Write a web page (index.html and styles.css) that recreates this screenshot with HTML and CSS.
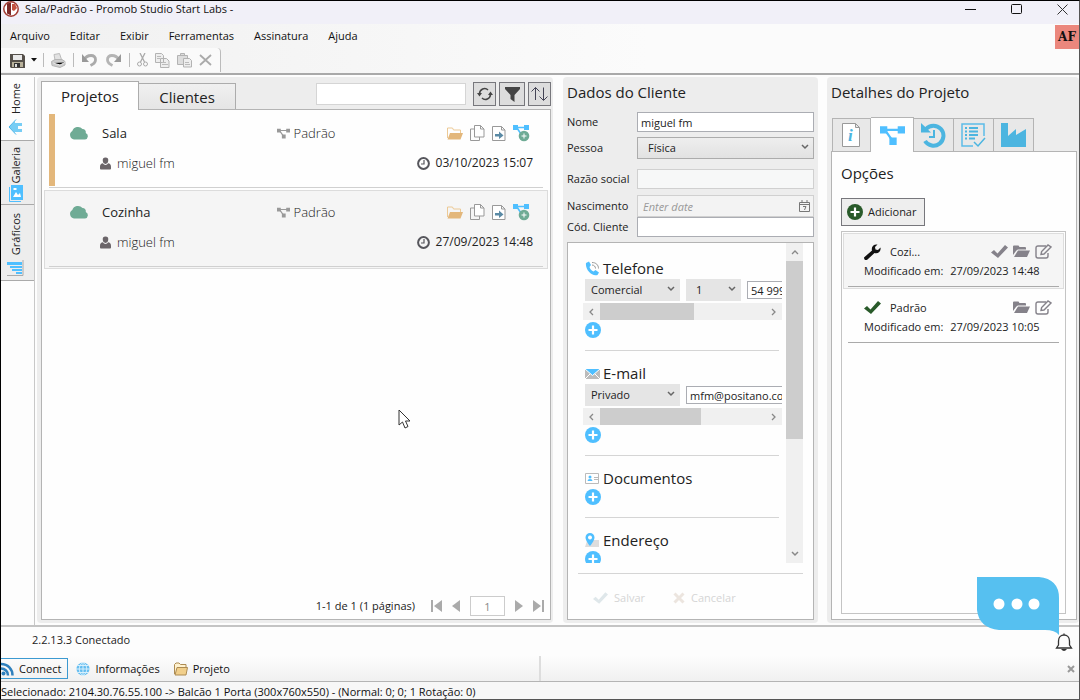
FILE: index.html
```
<!DOCTYPE html>
<html lang="pt-BR">
<head>
  <meta charset="UTF-8">
  <meta name="viewport" content="width=device-width, initial-scale=1.0">
  <title>Promob Studio Start Labs</title>
  <link rel="stylesheet" href="styles.css">
</head>
<body>
  <svg class="defs" aria-hidden="true">
    <symbol id="cloud" viewBox="0 0 20 14"><path fill="#6fab95" d="M5 13.5A4.6 4.6 0 0 1 3.300 5 6 6 0 0 1 13.500 3a3.600 3.600 0 0 1 3.300 4A3.400 3.400 0 0 1 16 13.500z"/></symbol>
    <symbol id="nodes" viewBox="0 0 24 20"><path fill="none" stroke="currentColor" stroke-width="2.200" d="M4 4.500h16M5 5l7 10"/><path fill="currentColor" d="M0 1h7v7H0zM17 1h7v7h-7zM9 12h7v7H9z"/></symbol>
    <symbol id="user" viewBox="0 0 12 13"><path fill="#6b6569" d="M6 0a3 3 0 0 1 3 3.300C9 5.300 7.800 7 6 7S3 5.300 3 3.300A3 3 0 0 1 6 0zM3.200 6.200C3.900 7.300 4.900 8 6 8s2.100-.7 2.800-1.800C10.700 6.400 12 7.800 12 10v2q0 1-1 1H1q-1 0-1-1v-2c0-2.200 1.300-3.600 3.200-3.800z"/></symbol>
    <symbol id="clock" viewBox="0 0 13 13"><circle cx="6.500" cy="6.500" r="5.400" fill="none" stroke="#56565c" stroke-width="2"/><path fill="none" stroke="#56565c" stroke-width="1.200" d="M7 3v4H4"/></symbol>
    <symbol id="folder" viewBox="0 0 16 13"><path fill="none" stroke="#ecc995" d="M.5 11V1h5l1 2h7v3"/><path fill="#e3b77b" d="M3 6h13l-2.500 6.500H.5z"/></symbol>
    <symbol id="copy" viewBox="0 0 15 16"><path fill="#fff" stroke="#999" d="M4.500.5h6l3.500 3.500v8H4.500zM10.500.5V4H14"/><path fill="none" stroke="#999" d="M4.500 4h-4v11.500h9V12"/></symbol>
    <symbol id="export" viewBox="0 0 14 15"><path fill="#fff" stroke="#999" d="M.5.5h9l3.500 3.500v10.500H.5zM9.500.5V4H13"/><path fill="#5a8aa5" d="M3 8h4V5.500l4.500 4L7 13v-2.500H3z"/></symbol>
    <symbol id="addnode" viewBox="0 0 17 17"><path fill="none" stroke="#4fbfff" stroke-width="1.600" d="M3 2.500h10M4 3l4 6"/><path fill="#4fbfff" d="M0 0h5v5H0zM11 0h5v5h-5z"/><circle cx="11" cy="11" r="5.300" fill="#6fab95"/><path stroke="#fff" d="M11 8.500v5M8.500 11h5"/></symbol>
    <symbol id="plus" viewBox="0 0 16 16"><circle cx="8" cy="8" r="8" fill="currentColor"/><path stroke="#fff" stroke-width="2.200" d="M8 3.500v9M3.500 8h9"/></symbol>
    <symbol id="chev" viewBox="0 0 8 6"><path fill="none" stroke="currentColor" stroke-width="1.500" d="M1 1l3 3 3-3"/></symbol>
    <symbol id="check" viewBox="0 0 17 13"><path fill="currentColor" d="M0 7.500L3 5l3.500 3.500L14 0l3 2.500L7 13z"/></symbol>
    <symbol id="cross" viewBox="0 0 12 12"><path stroke="currentColor" stroke-width="3" d="M1.500 1.500l9 9M10.500 1.500l-9 9"/></symbol>
    <symbol id="folder2" viewBox="0 0 17 13"><path fill="currentColor" d="M0 10V1.500Q0 .5 1 .5h4.500l1 1.500H12q1 0 1 1V4.500H5Q4 4.500 3 6z"/><path fill="currentColor" d="M5 5.500h12L14 12H1z"/></symbol>
    <symbol id="edit" viewBox="0 0 17 15"><path fill="none" stroke="currentColor" stroke-width="1.400" d="M11 2H3Q1 2 1 4v8q0 2 2 2h8q2 0 2-2V9"/><path fill="none" stroke="currentColor" stroke-width="1.400" d="M6 10.500l.6-3L13 1l3 2-7 7z"/></symbol>
  </svg>

  <header class="titlebar">
    <svg class="logo" viewBox="0 0 16 16"><circle cx="8" cy="8" r="7.200" fill="#fff" stroke="#a33c33" stroke-width="1.500"/><path fill="#7d2a28" d="M4 2.500L8 1.500v13l-4-2z"/><path fill="#c4523f" d="M9 3h3l2 4-3 3-2-1z"/></svg>
    <h1>Sala/Padrão - Promob Studio Start Labs -</h1>
    <div class="win-buttons">
      <button aria-label="Minimizar"><svg width="11" height="11"><path stroke="#111" d="M0 5.500h11"/></svg></button>
      <button aria-label="Maximizar"><svg width="11" height="11"><rect x=".5" y=".5" width="10" height="9" rx="1" fill="none" stroke="#111"/></svg></button>
      <button aria-label="Fechar"><svg width="11" height="11"><path stroke="#333" d="M.5.500l10 10M10.500.500l-10 10"/></svg></button>
    </div>
  </header>

  <div class="top">
    <div class="top-left">
      <nav class="menu">
        <a href="#">Arquivo</a><a href="#">Editar</a><a href="#">Exibir</a><a href="#">Ferramentas</a><a href="#">Assinatura</a><a href="#">Ajuda</a>
      </nav>
      <div class="toolbar">
        <button aria-label="Salvar"><svg width="15" height="15"><path fill="#55504a" d="M0 1h13l2 2v12H1l-1-1z"/><path fill="#e9e9e9" d="M3 2h9v5H3z"/><path fill="#b9b29b" d="M2 9h11v5H2z"/><path fill="#333" d="M4 10h6v4H4z"/><path fill="#ddd" d="M5 11h2v3H5z"/></svg></button>
        <button class="drop" aria-label="Mais"><svg width="6" height="4"><path fill="#111" d="M0 0h6L3 3.500z"/></svg></button>
        <i class="sep"></i>
        <button aria-label="Imprimir"><svg width="15" height="15"><path fill="#e2e2e2" stroke="#bbb" d="M4 7L3 1.500l5.500-1 2 6"/><path fill="#ccc" stroke="#b5b5b5" d="M.5 8.500L4 6.500h7l3 2v3.500L9 14.500l-8-2z"/><path stroke="#eee" d="M2 10l7 2 5-2.500"/></svg></button>
        <i class="sep"></i>
        <button aria-label="Desfazer"><svg width="17" height="14"><path fill="none" stroke="#aaa" stroke-width="2.800" d="M3 7c3-6 12-6 11.500 0 0 3-2 4-5 5.500"/><path fill="#999" d="M1 1v8h7z"/></svg></button>
        <button aria-label="Refazer"><svg width="17" height="14"><path fill="none" stroke="#b5b5b5" stroke-width="2.800" d="M14 7C11 1 2 1 2.500 7c0 3 2 4 5 5.500"/><path fill="#999" d="M16 1v8H9z"/></svg></button>
        <i class="sep"></i>
        <button aria-label="Recortar"><svg width="11" height="14"><path fill="none" stroke="#aaa" stroke-width="1.300" d="M3 0l4.500 9M8 0L3.500 9"/><circle cx="2.500" cy="11" r="2" fill="none" stroke="#aaa"/><circle cx="8.500" cy="11" r="2" fill="none" stroke="#aaa"/></svg></button>
        <button aria-label="Copiar"><svg width="15" height="15"><path fill="#eee" stroke="#b3b3b3" d="M.5.500h6l2 2v7h-8zM5.500 5.500h6l2.500 2.500v6.500H5.500z"/><path stroke="#bbb" d="M2 3.500h4M2 5.500h3M7 9.500h4M7 11.500h6"/></svg></button>
        <button aria-label="Colar"><svg width="15" height="15"><path fill="#ddd" stroke="#b3b3b3" d="M.5 2.500h10v9H.5zM3.500.500h4v2h-4z"/><path fill="#eee" stroke="#b3b3b3" d="M6.500 5.500h6l2 2v6.500h-8z"/><path stroke="#bbb" d="M8 9.500h4M8 11.500h5"/></svg></button>
        <button aria-label="Excluir"><svg width="13" height="12"><path stroke="#aaa" stroke-width="1.800" d="M1 1l11 10M12 1L1 11"/></svg></button>
      </div>
    </div>
    <span class="avatar">AF</span>
  </div>

  <main>
    <nav class="side">
      <button class="home"><span>Home</span><svg width="15" height="16"><path fill="#77cdf5" d="M1 8l6-6v2h7v3h-4v3h4v3H7v1z"/><path fill="none" stroke="#4db4e8" d="M8 .5L1 8l7 7.500"/></svg></button>
      <button class="galeria"><span>Galeria</span><svg width="15" height="17"><path fill="#4fbfff" d="M3 0h12v15H3z"/><path fill="none" stroke="#4fbfff" d="M1.500 2v14.500H13"/><path fill="#fff" d="M5 12l3-5 2 3 2-2 1 4zM5.500 3h3v2h-3z"/></svg></button>
      <button class="graficos"><span>Gráficos</span><svg width="17" height="17"><path fill="#4fbfff" d="M0 2h15v3H0zM3 6h12v2H3zM5 9h10v2H5zM9 12h6v2H9z"/><path fill="none" stroke="#aaa" d="M16 0v15.500H0"/></svg></button>
    </nav>

    <section class="panel projects">
      <div class="head">
        <div class="tabs">
          <button class="active">Projetos</button><button>Clientes</button>
        </div>
        <div class="tools">
          <input type="text" aria-label="Pesquisar">
          <button aria-label="Atualizar"><svg width="16" height="14"><path fill="none" stroke="#444" stroke-width="1.500" d="M2.500 7C2.500 2 8 0 11 3M13.500 7c0 5-5.500 7-8.500 4"/><path fill="#444" d="M0 6h5L2.500 9.500zM11 8h5l-2.500-3.500z"/></svg></button>
          <button class="wide" aria-label="Filtrar"><svg width="15" height="15"><path fill="#444" d="M0 0h15v2L9.500 8v7l-4-3V8L0 2z"/></svg></button>
          <button aria-label="Ordenar"><svg width="17" height="16"><path fill="none" stroke="#445" d="M4.500 14V1.500M.5 5.500l4-4 4 4M12.500 1.500V14M8.500 10.500l4 4 4-4"/></svg></button>
        </div>
      </div>
      <div class="box">
        <ul class="list">
          <li class="current">
            <div class="row">
              <div class="name"><svg width="20" height="14"><use href="#cloud"/></svg><b>Sala</b></div>
              <div class="option"><svg width="13" height="11"><use href="#nodes"/></svg>Padrão</div>
              <div class="actions"><svg width="16" height="13"><use href="#folder"/></svg><svg width="15" height="16"><use href="#copy"/></svg><svg width="14" height="15"><use href="#export"/></svg><svg width="17" height="17"><use href="#addnode"/></svg></div>
              <div class="client"><svg width="11" height="13"><use href="#user"/></svg>miguel fm</div>
              <div class="date"><svg width="13" height="13"><use href="#clock"/></svg>03/10/2023 15:07</div>
            </div>
          </li>
          <li class="hover">
            <div class="row">
              <div class="name"><svg width="20" height="14"><use href="#cloud"/></svg><b>Cozinha</b></div>
              <div class="option"><svg width="13" height="11"><use href="#nodes"/></svg>Padrão</div>
              <div class="actions"><svg width="16" height="13"><use href="#folder"/></svg><svg width="15" height="16"><use href="#copy"/></svg><svg width="14" height="15"><use href="#export"/></svg><svg width="17" height="17"><use href="#addnode"/></svg></div>
              <div class="client"><svg width="11" height="13"><use href="#user"/></svg>miguel fm</div>
              <div class="date"><svg width="13" height="13"><use href="#clock"/></svg>27/09/2023 14:48</div>
            </div>
          </li>
        </ul>
        <div class="pager">
          <span>1-1 de 1 (1 páginas)</span>
          <button aria-label="Primeira"><svg width="11" height="12"><path fill="#aaa" d="M0 0h2v12H0zM11 0v12L3 6z"/></svg></button>
          <button aria-label="Anterior"><svg width="8" height="12"><path fill="#aaa" d="M8 0v12L0 6z"/></svg></button>
          <input type="text" value="1" aria-label="Página">
          <button aria-label="Próxima"><svg width="8" height="12"><path fill="#aaa" d="M0 0v12l8-6z"/></svg></button>
          <button aria-label="Última"><svg width="11" height="12"><path fill="#aaa" d="M9 0h2v12H9zM0 0v12l8-6z"/></svg></button>
        </div>
      </div>
      <svg class="cursor" width="13" height="20"><path fill="#fff" stroke="#333" d="M1 1v15l3.500-3 2.500 6 3-1.500-2.500-5.500H12z"/></svg>
    </section>

    <section class="panel customer">
      <h2>Dados do Cliente</h2>
      <div class="form">
        <label for="nome">Nome</label><input id="nome" type="text" value="miguel fm">
        <label for="pessoa">Pessoa</label>
        <div class="select tall"><select id="pessoa"><option>Física</option></select><svg width="8" height="6"><use href="#chev"/></svg></div>
        <label for="razao">Razão social</label><input id="razao" class="off" type="text" disabled>
        <label for="nasc">Nascimento</label>
        <div class="date-box"><input id="nasc" type="text" placeholder="Enter date"><svg width="11" height="12"><path fill="none" stroke="#777" d="M.5 2.500h10v9H.5zM.5 4.500h10M3 0v3M8 0v3M4 6.500h3L5.500 10"/></svg></div>
        <label for="cod">Cód. Cliente</label><input id="cod" type="text">
      </div>
      <div class="box">
        <div class="scroller">
          <div class="contacts">
            <section>
              <h3><svg width="15" height="15"><path fill="#4fbfff" d="M1 2l3-1.500L6 4 4.500 6c.6 2 2 3.600 4 4.500L10.500 9l3.500 2.500-1.500 2.500C7 16 0 8.500 1 2z"/><path fill="none" stroke="#999" d="M7 4c2 0 3.500 1.500 3.500 3.500M7 1.500c4 0 6.500 2.500 6.500 6"/></svg>Telefone</h3>
              <div class="fields">
                <div class="select kind"><select aria-label="Tipo de telefone"><option>Comercial</option></select><svg width="8" height="6"><use href="#chev"/></svg></div>
                <div class="select num"><select aria-label="Número"><option>1</option></select><svg width="8" height="6"><use href="#chev"/></svg></div>
                <input type="text" value="54 99999-0000" aria-label="Telefone">
              </div>
              <div class="hscroll"><svg width="6" height="8"><path fill="none" stroke="#888" stroke-width="1.300" d="M5 1L2 4l3 3"/></svg><i></i><svg width="6" height="8"><path fill="none" stroke="#888" stroke-width="1.300" d="M1 1l3 3-3 3"/></svg></div>
              <button class="add" aria-label="Adicionar telefone"><svg width="16" height="16"><use href="#plus"/></svg></button>
            </section>
            <section>
              <h3><svg width="15" height="15"><path fill="#bbb" d="M0 3h15v10H0z"/><path fill="#4fbfff" d="M0 3h15L7.500 9.500z"/><path fill="none" stroke="#fff" d="M0 3l7.500 6.500L15 3M0 13l5-5M15 13l-5-5"/></svg>E-mail</h3>
              <div class="fields">
                <div class="select kind"><select aria-label="Tipo de e-mail"><option>Privado</option></select><svg width="8" height="6"><use href="#chev"/></svg></div>
                <input type="text" value="mfm@positano.com" aria-label="E-mail">
              </div>
              <div class="hscroll long"><svg width="6" height="8"><path fill="none" stroke="#888" stroke-width="1.300" d="M5 1L2 4l3 3"/></svg><i></i><svg width="6" height="8"><path fill="none" stroke="#888" stroke-width="1.300" d="M1 1l3 3-3 3"/></svg></div>
              <button class="add" aria-label="Adicionar e-mail"><svg width="16" height="16"><use href="#plus"/></svg></button>
            </section>
            <section>
              <h3><svg width="15" height="15"><path fill="#fff" stroke="#bbb" d="M.5 2.500h13v10H.5z"/><circle cx="5" cy="6" r="1.500" fill="#4fbfff"/><path fill="#4fbfff" d="M2.500 10q0-2 2.500-2t2.500 2z"/><path stroke="#bbb" d="M9 6.500h4M9 8.500h4"/></svg>Documentos</h3>
              <button class="add" aria-label="Adicionar documento"><svg width="16" height="16"><use href="#plus"/></svg></button>
            </section>
            <section>
              <h3><svg width="15" height="15"><path fill="#ddd" d="M2 8l7-1h5v7H0z"/><path fill="#4fbfff" fill-rule="evenodd" d="M5 0a4.500 4.500 0 0 1 4.500 4.500C9.500 8 5 13 5 13S.5 8 .5 4.500A4.500 4.500 0 0 1 5 0zm0 2.500a2 2 0 1 0 .01 0z"/></svg>Endereço</h3>
              <button class="add" aria-label="Adicionar endereço"><svg width="16" height="16"><use href="#plus"/></svg></button>
            </section>
          </div>
          <div class="vscroll"><svg width="8" height="6"><path fill="none" stroke="#888" stroke-width="1.300" d="M1 5l3-3 3 3"/></svg><i></i><svg width="8" height="6"><use href="#chev"/></svg></div>
        </div>
        <div class="confirm">
          <button disabled><svg class="ok" width="15" height="12"><use href="#check"/></svg>Salvar</button>
          <button disabled><svg class="no" width="12" height="12"><use href="#cross"/></svg>Cancelar</button>
        </div>
      </div>
    </section>

    <section class="panel details">
      <h2>Detalhes do Projeto</h2>
      <div class="icon-tabs">
        <button aria-label="Informações"><svg width="19" height="24"><path fill="#fff" stroke="#999" d="M.5.500h13l4 4v19H.5zM13.500.500v4h4"/><text x="6" y="18" class="info-i">i</text></svg></button>
        <button class="active" aria-label="Opções"><svg width="25" height="21"><use href="#nodes"/></svg></button>
        <button aria-label="Histórico"><svg width="25" height="25"><path fill="none" stroke="#4cb5e0" stroke-width="4" d="M5 6A10 10 0 1 1 4 18"/><path fill="#4cb5e0" d="M0 0v9.500h10z"/><path fill="none" stroke="#4cb5e0" stroke-width="2" d="M13 7v7H8"/></svg></button>
        <button aria-label="Lista"><svg width="25" height="25"><path fill="none" stroke="#5cbce8" stroke-width="1.500" d="M12 23H1V1h22v12"/><path stroke="#4cb5e0" stroke-width="2" d="M4 5h2M8 5h9M4 8.500h2M8 8.500h9M4 12h2M8 12h9M4 15.500h2M8 15.500h6"/><path fill="none" stroke="#4cb5e0" stroke-width="1.500" d="M13 19l4 4 7-8"/></svg></button>
        <button aria-label="Produção"><svg width="25" height="24"><path fill="#4cb5e0" d="M0 0h7v13l8-7v6l10-6v18H0z"/></svg></button>
      </div>
      <div class="box">
        <h3>Opções</h3>
        <button class="new"><svg width="16" height="16"><use href="#plus"/></svg>Adicionar</button>
        <ul class="options">
          <li class="hover"><div>
            <p class="top-line"><svg width="17" height="16"><path fill="#111" d="M0 13.500l8-7C7 3 9.500 0 13.500.5L11 3l.5 2.500 2.500.5 2.500-2.500c.8 4-2.500 6.500-6 5.500l-7 6.500C1.500 17 0 15.500 0 13.500z"/></svg><b>Cozi...</b>
              <span><svg width="17" height="13"><use href="#check"/></svg><svg width="17" height="13"><use href="#folder2"/></svg><svg width="17" height="15"><use href="#edit"/></svg></span></p>
            <p>Modificado em: <time>27/09/2023 14:48</time></p>
          </div></li>
          <li><div>
            <p class="top-line"><svg class="green" width="17" height="13"><use href="#check"/></svg><b>Padrão</b>
              <span><svg width="17" height="13"><use href="#folder2"/></svg><svg width="17" height="15"><use href="#edit"/></svg></span></p>
            <p>Modificado em: <time>27/09/2023 10:05</time></p>
          </div></li>
        </ul>
      </div>
    </section>
  </main>

  <div class="version">2.2.13.3 Conectado
    <svg class="bell" width="18" height="19"><path fill="none" stroke="#333" stroke-width="1.300" d="M9 .5V2M3.500 12V8c0-8 11-8 11 0v4l2 3h-15z"/><path fill="#333" d="M6 16h6q-3 4-6 0z"/></svg>
  </div>
  <div class="bottom-tabs">
    <div class="group">
      <button class="active"><svg width="13" height="14"><circle cx="2.500" cy="11.500" r="2" fill="#2f80bd"/><path fill="none" stroke="#2f80bd" stroke-width="2.500" d="M0 6.500c4 0 7 3 7 7M0 2c7 0 11.500 5 11.500 11.500"/></svg>Connect</button>
      <button><svg width="14" height="14"><circle cx="7" cy="7" r="6.500" fill="#63bdf0"/><path fill="none" stroke="#d7effc" d="M7 0v14M0 7h14M2 3.500h10M2 10.500h10M7 0c-5 4-5 10 0 14M7 0c5 4 5 10 0 14"/></svg>Informações</button>
      <button><svg width="14" height="14"><path fill="#fff2cf" stroke="#ad8b52" d="M.5 12V2.500L2 1h3l1.500 1.500H12V5"/><path fill="#f1cf8b" stroke="#ad8b52" d="M3 5.500h10.500L12 13H1z"/></svg>Projeto</button>
    </div>
    <button class="close" aria-label="Fechar painel"><svg width="8" height="8"><path stroke="#999" stroke-width="2" d="M1 1l6 6M7 1L1 7"/></svg></button>
  </div>
  <footer>Selecionado: 2104.30.76.55.100 -&gt; Balcão 1 Porta (300x760x550) - (Normal: 0; 0; 1 Rotação: 0)</footer>

  <button class="chat" aria-label="Chat"><svg width="83" height="59"><path fill="#56c0f0" d="M0 0h62q20 2 20 21v37q-4-5-14-5H22Q2 51 0 33z"/><g fill="#fff"><circle cx="22" cy="27" r="5.500"/><circle cx="40" cy="27" r="5.500"/><circle cx="57" cy="27" r="5.500"/></g></svg></button>
</body>
</html>
```

FILE: styles.css
```
* {margin: 0; padding: 0; box-sizing: border-box;}
body {
  display: flex;
  flex-direction: column;
  min-height: 100vh;
  border: 1px solid #000;
  border-right-color: #555;
  border-bottom-color: #555;
  background: #fdfdfd;
  color: #222;
  font: 12px/16px "Open Sans", "Noto Sans", sans-serif;
}
li {list-style: none;}
button, input, select {font: inherit; color: inherit;}
button {border: 0; background: none;}
svg {display: block; flex: none;}
input {
  min-width: 0;
  height: 20px;
  padding: 0 3px;
  border: 1px solid #abadb3;
  background: #fff;
  font-size: 11px;
}
h1, h2, h3, b {font-weight: normal;}
.defs {position: absolute; width: 0; height: 0;}

/* title, menu, toolbar */
.titlebar {
  display: flex;
  align-items: center;
  height: 23px;
  padding: 0 11px 7px 2px;
  background: #f1f0f8;
}
.logo {width: 16px; height: 16px;}
.titlebar h1 {flex: 1; padding-left: 6px; font-size: 11px; line-height: 16px; color: #111;}
.win-buttons {display: flex; gap: 35px;}
.top {
  display: flex;
  justify-content: space-between;
  height: 51px;
  border-bottom: 2px solid #a9a9a9;
  background: linear-gradient(to right, #f0f0f0, #fbfbfb 60%);
}
.menu {display: flex; gap: 20px; padding: 4px 9px;}
.menu a {color: #111; font-size: 11px; line-height: 16px; text-decoration: none;}
.toolbar {
  display: flex;
  align-items: center;
  gap: 7px;
  width: 220px;
  height: 24px;
  padding-left: 9px;
  border-right: 1px solid #bbb;
  border-radius: 0 4px 0 0;
  background: #fafafa;
}
.toolbar .sep {width: 1px; height: 14px; background: #bbb;}
.toolbar .drop {margin: 0 -1px;}
.avatar {
  width: 24px;
  height: 24px;
  margin-top: 1px;
  background: #eb877d;
  color: #111;
  font: bold 12px/24px "DejaVu Serif", serif;
  text-align: center;
}

/* main */
main {
  display: flex;
  flex: 1;
  padding-top: 2px;
  border-bottom: 2px solid #c4c4c4;
}
.side {display: flex; flex-direction: column; width: 34px; margin-right: 2px; border-right: 1px solid #c8c8c8;}
.side button {
  display: flex;
  flex-direction: column;
  align-items: center;
  gap: 3px;
  padding: 6px 4px 0 0;
  border-top: 1px solid #aaa;
  background: #ededed;
}
.side span {font-size: 11px; line-height: 16px; writing-mode: vertical-rl; transform: rotate(180deg);}
.side .home {height: 63px; gap: 5px; border: 0; background: none;}
.side .galeria {height: 64px; gap: 2px;}
.side .graficos {height: 77px; border-bottom: 1px solid #aaa; padding-top: 8px; gap: 5px;}
.panel {
  display: flex;
  flex-direction: column;
  margin-bottom: 2px;
  border-radius: 4px;
  background: #ededed;
}
.panel h2 {padding-top: 4px; font-size: 15px; line-height: 22px;}
.box {
  display: flex;
  flex-direction: column;
  flex: 1;
  border: 1px solid #b4b4b4;
  background: #fefefe;
}

/* project list */
.projects {position: relative; flex: 1; margin-right: 10px; padding: 4px 2px 3px 4px;}
.head {display: flex; justify-content: space-between; height: 28px;}
.head .tabs {display: flex; align-items: flex-end;}
.tabs button {
  width: 97px;
  height: 26px;
  border: 1px solid #acacac;
  border-left: 0;
  border-bottom: 0;
  background: linear-gradient(#f0f0f0, #e5e5e5);
  font-size: 15px;
  line-height: 22px;
}
.tabs .active {width: 98px; height: 29px; margin-bottom: -1px; z-index: 1; border-left: 1px solid #acacac; background: #fefefe;}
.tools {display: flex; gap: 3px;}
.tools input {width: 150px; height: 22px; margin: 2px 4px 0 0; border-color: #d5d5d5;}
.tools button {
  display: flex;
  align-items: center;
  justify-content: center;
  width: 23px;
  height: 24px;
  margin-top: 1px;
  border: 1px solid #77777c;
  background: #ddd;
}
.tools .wide {width: 26px;}
.list {flex: 1; padding: 0 2px;}
.list li {height: 79px; padding: 3px 4px 0; border: 1px solid transparent;}
.list .hover {margin-top: 1px; padding-top: 2px; border-color: #dcdcdc; background: #f5f5f5;}
.list .current .row {border-left: 6px solid #e3b77b; padding-left: 14px;}
.row {
  display: grid;
  grid-template-columns: 1fr 140px auto;
  grid-template-rows: 36px 24px;
  align-items: center;
  height: 72px;
  padding: 1px 10px 0 20px;
  font-weight: 300;
}
.list li::after {content: ""; display: block; height: 1px; margin-top: 1px; background: #d0d0d0;}
.row > div {display: flex; align-items: center;}
.name {gap: 13px;}
.name b {font-size: 13px; font-weight: 400;}
.option {gap: 4px; font-size: 13px;}
.option svg {color: #999;}
.actions {justify-content: flex-end; gap: 7px; padding-right: 3px;}
.client {grid-column: 1 / 3; gap: 6px; padding-left: 31px; font-size: 13px;}
.date {gap: 6px; font-size: 12px; font-weight: 400;}
.pager {display: flex; align-items: center; justify-content: flex-end; gap: 10px; padding: 0 6px 3px;}
.pager span {margin-right: 6px; font-size: 11px;}
.pager input {width: 35px; border-color: #ccc; color: #888; text-align: center;}
.cursor {position: absolute; top: 332px; left: 361px;}

/* customer */
.customer {width: 255px; margin-right: 9px; padding: 0 4px 3px;}
.form {
  display: grid;
  grid-template-columns: 70px 1fr;
  grid-template-rows: 20px 32px 30px 23px 20px;
  align-items: center;
  padding: 9px 0 5px;
}
.form label {font-size: 11px; white-space: nowrap;}
.form .off {border-color: #d0d0d0; background: #f7f8f8;}
.select {position: relative; flex: none; height: 22px;}
.select select {
  width: 100%;
  height: 100%;
  padding-left: 6px;
  border: 0;
  border-radius: 0;
  background: #e5e5e5;
  font-size: 11px;
  appearance: none;
}
.select svg {position: absolute; top: 7px; right: 5px; color: #666;}
.form .select select {padding-left: 10px; border: 1px solid #acacac; background: linear-gradient(#eee, #e2e2e2);}
.date-box {position: relative; height: 22px; align-self: end;}
.date-box input {width: 100%; height: 22px; padding-left: 5px; border-color: #d0d0d0; background: #f3f3f3; font-style: italic;}
.date-box input::placeholder {color: #999;}
.date-box svg {position: absolute; top: 5px; right: 4px;}
.scroller {display: flex; justify-content: space-between; height: 320px; padding: 0 10px 0 15px; overflow: hidden;}
.contacts {width: 199px; padding-top: 3px; overflow: hidden;}
.contacts section {margin: 0 3px 0 2px; padding: 11px 0 12px; border-bottom: 1px solid #d5d5d5;}
.contacts h3 {display: flex; align-items: center; gap: 3px; font-size: 15px; line-height: 22px;}
.fields {display: flex; gap: 6px; width: 320px; margin-bottom: 2px;}
.fields input {height: 18px; margin-top: 2px;}
.kind {width: 95px;}
.num {width: 55px;}
.num select {padding-left: 10px;}
.hscroll {
  display: flex;
  align-items: center;
  width: 199px;
  height: 17px;
  margin: 0 0 2px -2px;
  padding: 0 5px;
  background: #f0f0f0;
}
.hscroll i {width: 94px; height: 17px; margin: 0 auto 0 6px; background: #cdcdcd;}
.hscroll.long i {width: 101px;}
.add {display: block; color: #4fbfff;}
.vscroll {display: flex; flex-direction: column; align-items: center; width: 17px; padding: 6px 0; background: #f0f0f0; color: #888;}
.vscroll i {width: 17px; height: 178px; margin: 6px 0 auto; background: #cdcdcd;}
.confirm {display: flex; gap: 28px; margin: 10px 10px 0; padding: 16px 15px 12px; border-top: 1px solid #d5d5d5;}
.confirm button {display: flex; align-items: center; gap: 6px; color: #d5d5d5; font-size: 11px;}
.confirm .ok {color: #dfe7ea;}
.confirm .no {color: #ece5df;}

/* details */
.details {width: 252px; padding: 0 2px 3px 4px;}
.icon-tabs {display: flex; align-items: flex-end; height: 48px; padding-left: 1px;}
.icon-tabs button {
  display: flex;
  align-items: center;
  justify-content: center;
  width: 40px;
  height: 33px;
  border: 1px solid #b4b4b4;
  border-bottom: 0;
  border-left: 0;
  background: #e8e8e8;
}
.icon-tabs button:first-child {width: 39px; border-left: 1px solid #b4b4b4;}
.icon-tabs .active {z-index: 1; width: 43px; height: 35px; margin-bottom: -1px; background: #fefefe; color: #4fbfff;}
.info-i {fill: #4cb5e0; font: italic bold 17px "Liberation Serif", serif;}
.details .box {padding: 10px 10px 5px 9px;}
.details h3 {font-size: 15px; line-height: 22px;}
.new {
  display: flex;
  align-items: center;
  gap: 5px;
  width: 84px;
  height: 28px;
  margin: 14px 0 5px;
  padding: 0 5px;
  border: 1px solid #77777c;
  background: #eee;
  font-size: 11px;
}
.new svg {color: #295a2a;}
.options {flex: 1; padding: 1px; border: 1px solid #c4c4c4;}
.options li {height: 56px; padding: 0 4px; border: 1px solid transparent;}
.options .hover {border-color: #ddd; background: #f5f5f5;}
.options div {height: 53px; padding: 8px 7px 0 16px; border-bottom: 1px solid #aaa;}
.options p {font-size: 11px; line-height: 19px; white-space: nowrap;}
.options time {margin-left: 4px;}
.options .top-line {display: flex; align-items: center;}
.top-line b {flex: 1; padding-left: 9px;}
.top-line span {display: flex; align-items: center; gap: 5px; color: #85828a;}
.green {color: #295a2a;}

/* bottom */
.version {position: relative; height: 29px; padding: 5px 0 0 31px; font-size: 11px;}
.bell {position: absolute; top: 6px; right: 6px;}
.bottom-tabs {
  display: flex;
  align-items: center;
  justify-content: space-between;
  height: 26px;
  padding-right: 4px;
  border-bottom: 1px solid #b4b4b4;
  background: linear-gradient(#fdfdfd, #f0f0f0);
}
.group {display: flex; align-items: center; gap: 2px; width: 540px; height: 25px; border-right: 2px solid #ddd;}
.group button {display: flex; align-items: center; gap: 5px; height: 21px; padding: 0 6px; color: #111; font-size: 11px;}
.group .active {padding-left: 0; border: 1px solid #3c9ad1; border-left: 0;}
footer {
  height: 17px;
  padding-top: 2px;
  background: #f7f7f7;
  color: #111;
  font-size: 11px;
  line-height: 15px;
}
.chat {position: fixed; right: 20px; bottom: 64px; cursor: pointer;}
```
